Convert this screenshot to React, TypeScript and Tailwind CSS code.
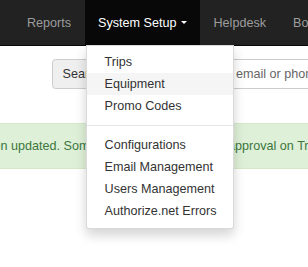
import React from 'react';

const navLinks = ['Reports', 'System Setup', 'Helpdesk', 'Bookings'];

const menuTop = ['Trips', 'Equipment', 'Promo Codes'];
const menuBottom = ['Configurations', 'Email Management', 'Users Management', 'Authorize.net Errors'];

const MenuItem: React.FC<{ label: string; active?: boolean }> = ({ label, active }) => (
  <a
    href="#"
    className={`flex h-[22px] items-center px-[18px] text-[12.6px] leading-[18px] text-[#333] whitespace-nowrap ${
      active ? 'bg-[#f5f5f5]' : ''
    }`}
  >
    {label}
  </a>
);

const App: React.FC = () => {
  return (
    <div
      className="relative h-[267px] w-[308px] overflow-hidden bg-white"
      style={{ fontFamily: '"Liberation Sans", Arial, sans-serif' }}
    >
      {/* Navbar */}
      <nav className="relative z-10 flex h-[46px] border-b border-[#080808] bg-[#222]">
        <ul className="ml-[13.5px] flex">
          {navLinks.map((link) =>
            link === 'System Setup' ? (
              <li key={link} className="relative">
                <a
                  href="#"
                  className="flex h-[45px] items-center whitespace-nowrap bg-[#080808] px-[13.5px] text-[12.6px] leading-[18px] text-white"
                >
                  System Setup
                  <span className="ml-[4px] inline-block h-0 w-0 border-x-[3.5px] border-t-[3.6px] border-x-transparent border-t-white" />
                </a>
                {/* Dropdown */}
                <div className="absolute left-[1px] top-full w-[148px] rounded-b-[3.6px] border border-[rgba(0,0,0,0.15)] bg-white pt-[5px] pb-[6px] shadow-[0_6px_12px_rgba(0,0,0,0.175)]">
                  {menuTop.map((item) => (
                    <MenuItem key={item} label={item} active={item === 'Equipment'} />
                  ))}
                  <div className="my-[8px] h-px bg-[#e5e5e5]" />
                  {menuBottom.map((item) => (
                    <MenuItem key={item} label={item} />
                  ))}
                </div>
              </li>
            ) : (
              <li key={link}>
                <a
                  href="#"
                  className="flex h-[45px] items-center whitespace-nowrap px-[13.5px] text-[12.6px] leading-[18px] text-[#9d9d9d]"
                >
                  {link}
                </a>
              </li>
            )
          )}
        </ul>
      </nav>

      {/* Search row */}
      <div className="ml-[52px] mt-[13px] flex w-[700px]">
        <button className="flex h-[30px] w-[74.5px] shrink-0 items-center whitespace-nowrap rounded-l-[3.6px] border border-[#ccc] bg-[#efefef] px-[9.5px] text-[12.6px] text-[#333]">
          Search by
        </button>
        <div className="flex h-[30px] w-[320px] items-center whitespace-nowrap rounded-r-[3.6px] border border-l-0 border-[#ccc] bg-white px-[10.8px] text-[12.6px] text-[#666]">
          Search by name, email or phone
        </div>
      </div>

      {/* Alert */}
      <div className="-ml-[96.8px] mt-[34px] w-[700px] whitespace-nowrap rounded-[3.6px] border border-[#d6e9c6] bg-[#dff0d8] px-[13.5px] py-[13px] text-[12.6px] leading-[18px] text-[#3c763d]">
        Trips have been updated. Some of them are waiting for approval on Trips page.
      </div>
    </div>
  );
};

export default App;
